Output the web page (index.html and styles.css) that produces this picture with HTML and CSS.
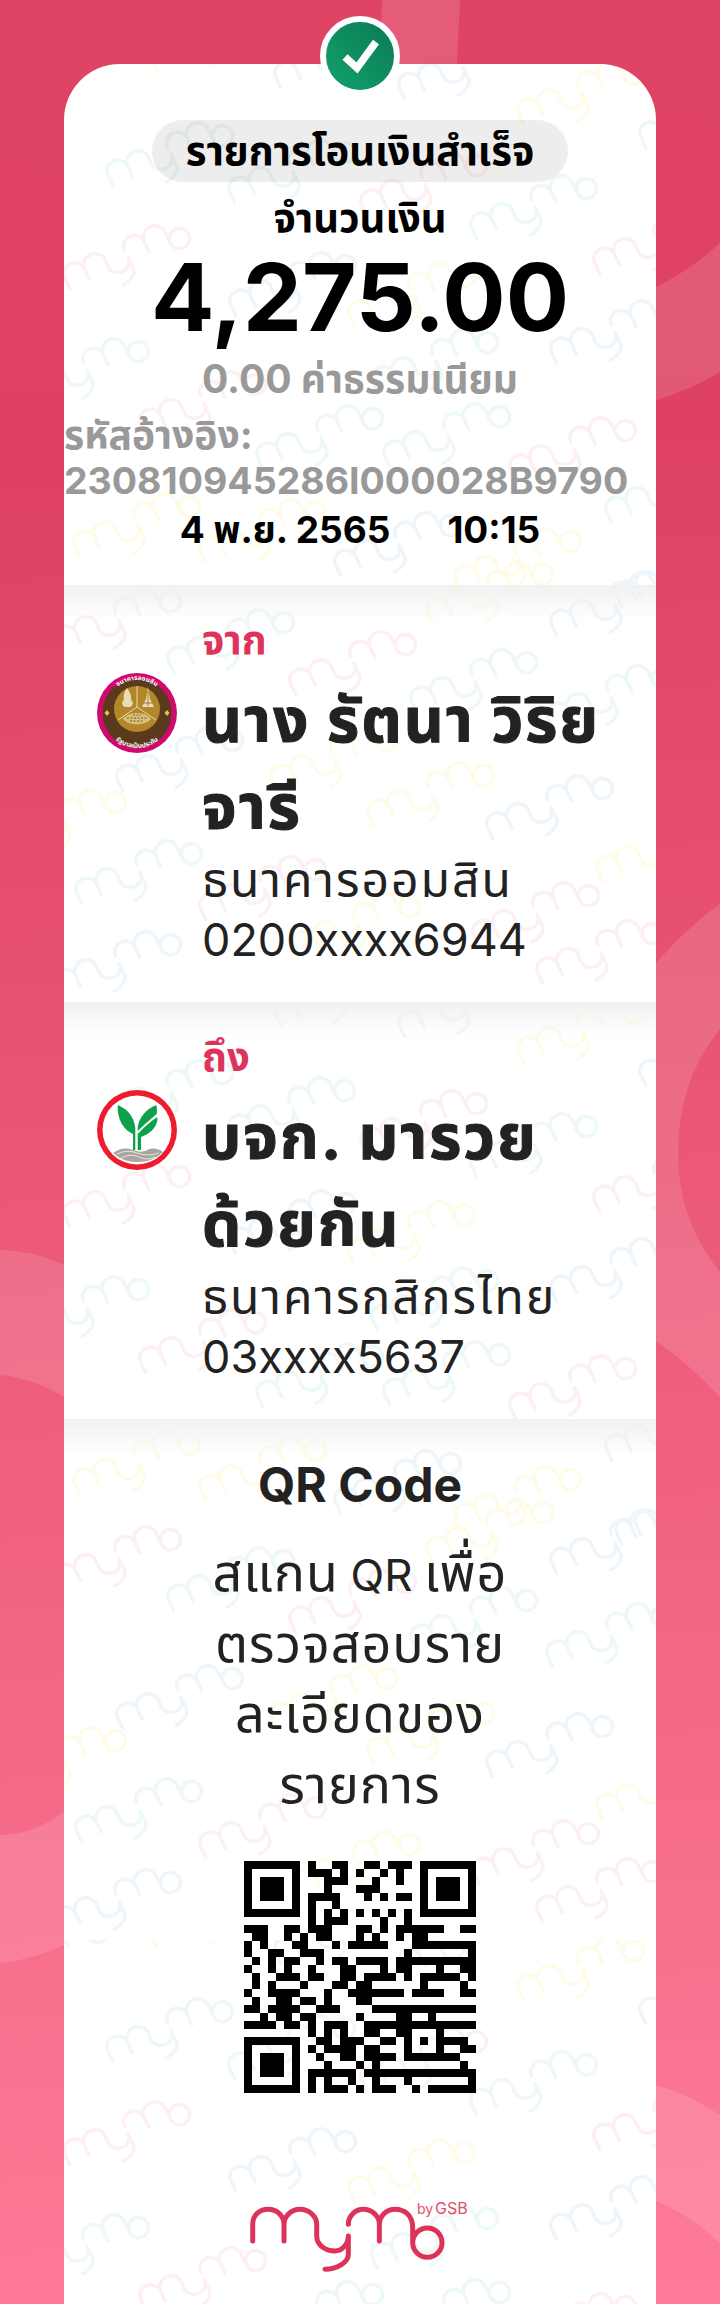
FILE: index.html
```html
<!DOCTYPE html>
<html lang="th">

<head>
    <meta charset="UTF-8">
    <meta name="viewport" content="width=device-width, initial-scale=1.0">
    <title>รายการโอนเงินสำเร็จ</title>
    <link rel="stylesheet" href="styles.css">
</head>

<body>

    <svg class="bg-shapes" viewBox="0 0 720 2304" aria-hidden="true">
        <path d="M382 0 L380 64 L380 200 Q500 380 656 400 Q690 390 720 372 L720 243 Q690 270 656 287 Q500 250 457 64 L460 0 Z" />
        <path fill-rule="evenodd" d="M656 963 Q690 925 720 904 L720 1397 Q690 1365 656 1341 Z M720 1029 Q678 1080 678 1154 Q678 1220 720 1272 Z" />
        <path d="M0 1250 Q32 1250 64 1265 L64 1397 Q32 1378 0 1375 Z" />
        <path d="M0 1835 Q32 1835 64 1812 L64 1945 Q32 1960 0 1963 Z" />
        <path d="M656 2085 Q690 2095 720 2115 L720 2243 Q690 2215 656 2201 Z" />
    </svg>

    <div class="card">
        <svg class="watermark" aria-hidden="true">
            <defs>
                <path id="mark" fill="none" stroke-linecap="round" stroke-linejoin="round" d="M-282 5 V-45 C-282 -75 -260 -90 -235 -90 C-210 -90 -188 -70 -188 -45 V5 M-188 -45 C-188 -70 -165 -90 -140 -90 C-115 -90 -90 -70 -90 -45 V-10 C-90 20 -60 35 -35 35 C-15 35 5 15 5 -10 V45 C5 70 -30 90 -65 90 M5 -45 C5 -70 25 -90 50 -90 C75 -90 98 -70 98 -45 V5 M98 -45 C98 -70 120 -90 145 -90 C175 -90 198 -70 198 -35 V10 A44 44 0 1 0 242 -34 A44 44 0 0 0 198 10" />
                <use id="wm" href="#mark" transform="rotate(-25) scale(.23)" stroke-width="15" />
                <pattern id="tile" width="592" height="938" patternUnits="userSpaceOnUse">
                    <g stroke="#fdf0f2">
                        <use href="#wm" x="-17" y="14" />
                        <use href="#wm" x="361" y="123" />
                        <use href="#wm" x="594" y="181" />
                        <use href="#wm" x="64" y="196" />
                        <use href="#wm" x="140" y="342" />
                        <use href="#wm" x="510" y="388" />
                        <use href="#wm" x="55" y="559" />
                        <use href="#wm" x="290" y="602" />
                        <use href="#wm" x="200" y="827" />
                        <use href="#wm" x="473" y="853" />
                        <use href="#wm" x="537" y="891" />
                    </g>
                    <g stroke="#eef8f6">
                        <use href="#wm" x="107" y="93" />
                        <use href="#wm" x="229" y="110" />
                        <use href="#wm" x="471" y="146" />
                        <use href="#wm" x="23" y="309" />
                        <use href="#wm" x="372" y="300" />
                        <use href="#wm" x="257" y="376" />
                        <use href="#wm" x="384" y="374" />
                        <use href="#wm" x="606" y="430" />
                        <use href="#wm" x="168" y="580" />
                        <use href="#wm" x="411" y="620" />
                        <use href="#wm" x="547" y="636" />
                        <use href="#wm" x="76" y="811" />
                    </g>
                    <g stroke="#fffbe9">
                        <use href="#wm" x="151" y="-22" />
                        <use href="#wm" x="518" y="32" />
                        <use href="#wm" x="349" y="234" />
                        <use href="#wm" x="74" y="464" />
                        <use href="#wm" x="200" y="470" />
                        <use href="#wm" x="455" y="499" />
                        <use href="#wm" x="427" y="532" />
                        <use href="#wm" x="271" y="698" />
                        <use href="#wm" x="368" y="733" />
                        <use href="#wm" x="0" y="760" />
                        <use href="#wm" x="597" y="789" />
                        <use href="#wm" x="294" y="864" />
                    </g>
                    <g stroke="#eef6fc">
                        <use href="#wm" x="275" y="-5" />
                        <use href="#wm" x="399" y="6" />
                        <use href="#wm" x="640" y="55" />
                        <use href="#wm" x="230" y="223" />
                        <use href="#wm" x="551" y="271" />
                        <use href="#wm" x="335" y="483" />
                        <use href="#wm" x="616" y="514" />
                        <use href="#wm" x="551" y="543" />
                        <use href="#wm" x="117" y="698" />
                        <use href="#wm" x="487" y="746" />
                        <use href="#wm" x="55" y="902" />
                    </g>
                </pattern>
            </defs>
            <rect width="100%" height="100%" fill="url(#tile)" />
        </svg>

        <div class="summary">
            <div class="status-pill">รายการโอนเงินสำเร็จ</div>
            <div class="amount-label">จำนวนเงิน</div>
            <div class="amount">4,275.00</div>
            <div class="fee">0.00 ค่าธรรมเนียม</div>
            <div class="ref-label">รหัสอ้างอิง:</div>
            <div class="ref">230810945286I000028B9790</div>
            <div class="datetime"><span>4 พ.ย. 2565</span><span>10:15</span></div>
        </div>

        <div class="party">
            <svg class="bank-logo" viewBox="0 0 80 80" aria-hidden="true">
                <defs>
                    <path id="ringTop" d="M9 38 A31 31 0 0 1 71 38" />
                    <path id="ringBottom" d="M7 42 A33 33 0 0 0 73 42" />
                </defs>
                <circle cx="40" cy="40" r="40" fill="#cf0a6f" />
                <circle cx="40" cy="40" r="34.5" fill="#5a3a1c" />
                <circle cx="40" cy="36" r="23" fill="#b4862a" />
                <path d="M40 13 V34 L21 47 M40 34 L59 47" fill="none" stroke="#ecd9a4" stroke-width="1" />
                <path d="M30 15 C33 19 35 23 34 27 C37 29 36 33 33 34 L28 34 C25 33 24 29 27 27 C26 23 27 19 30 15 Z" fill="#e9dcb8" />
                <path d="M51 14 L53 26 L57 34 H45 L49 26 Z" fill="#e9dcb8" />
                <path d="M51 18 V33 M47 30 H55" stroke="#8a6420" stroke-width=".8" />
                <path d="M26 46 C32 38 48 38 54 46 C48 53 32 53 26 46 Z" fill="#d9bf7c" />
                <path d="M30 45 H50 M33 48 H47 M36 42 H44" stroke="#7a5a1e" stroke-width="1" stroke-dasharray="2 1.5" />
                <text class="ring-text"><textPath href="#ringTop" startOffset="50%" text-anchor="middle">ธนาคารออมสิน</textPath></text>
                <text class="ring-text"><textPath href="#ringBottom" startOffset="50%" text-anchor="middle">รัฐบาลเป็นประกัน</textPath></text>
                <path d="M10 37 L12.5 40 L10 43 L7.5 40 Z M70 37 L72.5 40 L70 43 L67.5 40 Z" fill="#e9c04a" />
            </svg>
            <div class="party-info">
                <div class="party-label">จาก</div>
                <div class="party-name">นาง รัตนา วิริย<br>จารี</div>
                <div class="party-bank">ธนาคารออมสิน</div>
                <div class="party-account">0200xxxx6944</div>
            </div>
        </div>

        <div class="party">
            <svg class="bank-logo" viewBox="0 0 80 80" aria-hidden="true">
                <circle cx="40" cy="40" r="40" fill="#ed1c2e" />
                <circle cx="40" cy="40" r="34.5" fill="#fff" />
                <path d="M20.7 15 C30 19 37 26 38.3 38 V60 H36 V44 C27 40 20 30 20.7 15 Z" fill="#0da14b" />
                <path d="M59.3 15 C49 19 42 27 40.7 38 V41 C48 34 55 28 59.8 24 C60 21 60 18 59.3 15 Z" fill="#0da14b" />
                <path d="M60.5 27 C54 31 47 37 40.7 44 V60 H44 V47 C52 44 61 38 60.5 27 Z" fill="#0da14b" />
                <path d="M16 63 Q26 56 36 60 T52 59 Q60 57 66 62 Q56 72 40 72 Q26 72 16 63 Z" fill="#a9a59f" />
                <path d="M20 64 Q30 59 40 63 T62 63 M24 68 Q34 63 42 67 T58 67" fill="none" stroke="#fff" stroke-width=".7" />
            </svg>
            <div class="party-info">
                <div class="party-label">ถึง</div>
                <div class="party-name">บจก. มารวย<br>ด้วยกัน</div>
                <div class="party-bank">ธนาคารกสิกรไทย</div>
                <div class="party-account">03xxxx5637</div>
            </div>
        </div>

        <div class="qr-section">
            <h2 class="qr-title">QR Code</h2>
            <p class="qr-text">สแกน <span class="qr-latin">QR</span> เพื่อ<br>ตรวจสอบราย<br>ละเอียดของ<br>รายการ</p>
            <svg class="qr-code" viewBox="0 0 29 29" shape-rendering="crispEdges" aria-hidden="true">
                <path fill="none" stroke="#000" stroke-width="1" d="
                    M0 .5h7M8 .5h1M11 .5h2M15 .5h2M18 .5h3M22 .5h7
                    M0 1.5h1M6 1.5h1M8 1.5h3M12 1.5h1M14 1.5h1M17 1.5h1M19 1.5h1M22 1.5h1M28 1.5h1
                    M0 2.5h1M2 2.5h3M6 2.5h1M10 2.5h3M16 2.5h1M19 2.5h1M22 2.5h1M24 2.5h3M28 2.5h1
                    M0 3.5h1M2 3.5h3M6 3.5h1M10 3.5h1M14 3.5h3M22 3.5h1M24 3.5h3M28 3.5h1
                    M0 4.5h1M2 4.5h3M6 4.5h1M8 4.5h4M15 4.5h1M17 4.5h1M19 4.5h2M22 4.5h1M24 4.5h3M28 4.5h1
                    M0 5.5h1M6 5.5h1M8 5.5h1M11 5.5h1M22 5.5h1M28 5.5h1
                    M0 6.5h7M8 6.5h1M10 6.5h1M12 6.5h1M14 6.5h1M16 6.5h1M18 6.5h1M20 6.5h1M22 6.5h7
                    M8 7.5h1M10 7.5h3M17 7.5h1M20 7.5h1
                    M0 8.5h3M5 8.5h2M8 8.5h3M14 8.5h2M17 8.5h1M19 8.5h6M27 8.5h2
                    M1 9.5h2M5 9.5h1M7 9.5h1M9 9.5h2M14 9.5h1M16 9.5h1M19 9.5h1M21 9.5h2
                    M0 10.5h1M2 10.5h1M6 10.5h2M11 10.5h1M13 10.5h5M21 10.5h8
                    M0 11.5h1M3 11.5h2M7 11.5h3M20 11.5h1M28 11.5h1
                    M1 12.5h1M3 12.5h1M5 12.5h2M9 12.5h1M11 12.5h2M14 12.5h4M19 12.5h10
                    M0 13.5h1M3 13.5h1M5 13.5h1M8 13.5h1M12 13.5h2M17 13.5h1M19 13.5h2M24 13.5h1M27 13.5h2
                    M1 14.5h1M4 14.5h3M8 14.5h2M12 14.5h2M15 14.5h4M20 14.5h1M22 14.5h5M28 14.5h1
                    M1 15.5h1M3 15.5h1M7 15.5h1M11 15.5h2M14 15.5h2M22 15.5h1M27 15.5h1
                    M0 16.5h1M3 16.5h4M10 16.5h1M13 16.5h7M21 16.5h4M27 16.5h2
                    M1 17.5h1M4 17.5h2M7 17.5h2M10 17.5h1M14 17.5h2
                    M0 18.5h2M3 18.5h4M9 18.5h3M16 18.5h13
                    M2 19.5h1M4 19.5h2M7 19.5h2M14 19.5h1M19 19.5h2M23 19.5h1
                    M0 20.5h4M5 20.5h2M8 20.5h1M10 20.5h3M15 20.5h14
                    M8 21.5h1M10 21.5h1M12 21.5h1M15 21.5h2M19 21.5h2M24 21.5h1
                    M0 22.5h7M9 22.5h2M12 22.5h3M17 22.5h2M20 22.5h1M22 22.5h1M24 22.5h4
                    M0 23.5h1M6 23.5h1M8 23.5h1M10 23.5h4M15 23.5h2M20 23.5h1M24 23.5h1M27 23.5h2
                    M0 24.5h1M2 24.5h3M6 24.5h1M9 24.5h1M12 24.5h2M15 24.5h4M20 24.5h7
                    M0 25.5h1M2 25.5h3M6 25.5h1M10 25.5h1M14 25.5h1M16 25.5h1M27 25.5h1
                    M0 26.5h1M2 26.5h3M6 26.5h1M8 26.5h6M15 26.5h14
                    M0 27.5h1M6 27.5h1M8 27.5h1M10 27.5h1M13 27.5h1M16 27.5h1M20 27.5h1M28 27.5h1
                    M0 28.5h7M8 28.5h1M10 28.5h3M14 28.5h1M16 28.5h3M21 28.5h1M23 28.5h6" />
            </svg>
            <svg class="brand" viewBox="0 0 220 72" aria-label="mymo by GSB">
                <use href="#mark" stroke="#de3358" stroke-width="15" transform="translate(96.7 38.3) scale(.3333)" />
                <text class="brand-by" x="167" y="13">by</text>
                <text class="brand-gsb" x="185" y="13">GSB</text>
            </svg>
        </div>

        <div class="badge">
            <svg viewBox="0 0 68 68" aria-hidden="true">
                <path d="M19 35 L31 46 L50 20" fill="none" stroke="#fff" stroke-width="7.5" />
            </svg>
        </div>
    </div>

</body>

</html>
```

FILE: styles.css
```css
html,
body {
    margin: 0;
    padding: 0;
}

body {
    position: relative;
    height: 2304px;
    overflow: hidden;
    padding-top: 64px;
    box-sizing: border-box;
    background: linear-gradient(176deg, #e04465 0%, #de4162 20%, #ff7b99 100%);
    font-family: Inter, "Noto Sans", "Noto Sans Thai", "Liberation Sans", sans-serif;
}

.bg-shapes {
    position: absolute;
    top: 0;
    left: 0;
    width: 720px;
    height: 2304px;
    fill: rgba(255, 255, 255, 0.13);
}

.card {
    position: relative;
    width: 592px;
    height: 2240px;
    margin: 0 auto;
    background-color: #fff;
    border-radius: 56px 56px 0 0;
}

.watermark {
    position: absolute;
    top: 0;
    left: 0;
    width: 100%;
    height: 100%;
    border-radius: inherit;
}

.summary,
.party,
.qr-section {
    position: relative;
}

.badge {
    position: absolute;
    top: -48px;
    left: 256px;
    width: 68px;
    height: 68px;
    border: 6px solid #fff;
    border-radius: 50%;
    background: linear-gradient(45deg, #12a26e, #0b7a52);
}

.badge svg {
    display: block;
    width: 68px;
    height: 68px;
}

.summary {
    height: 521px;
    padding-top: 56px;
    box-sizing: border-box;
    text-align: center;
    color: #000;
}

.status-pill {
    width: 416px;
    height: 62px;
    margin: 0 auto;
    border-radius: 31px;
    background-color: rgba(0, 0, 0, 0.07);
    font-size: 40px;
    font-weight: bold;
    line-height: 62px;
}

.amount-label {
    margin-top: 14px;
    font-size: 40px;
    font-weight: bold;
    line-height: 44px;
}

.amount {
    margin-top: 11px;
    font-size: 94px;
    font-weight: bold;
    line-height: 92px;
}

.fee {
    margin-top: 14px;
    font-size: 39px;
    font-weight: bold;
    line-height: 44px;
    color: #999;
}

.ref-label {
    margin-top: 11px;
    font-size: 39px;
    font-weight: bold;
    line-height: 45px;
    color: #999;
    text-align: left;
}

.ref {
    font-size: 37.5px;
    font-weight: bold;
    line-height: 48px;
    color: #999;
    text-align: left;
    white-space: nowrap;
}

.datetime {
    display: flex;
    justify-content: center;
    gap: 57px;
    margin-top: 1px;
    font-size: 37px;
    font-weight: bold;
    line-height: 48px;
}

.party {
    display: flex;
    gap: 25px;
    height: 417px;
    padding: 35px 0 0 33px;
    box-sizing: border-box;
    background: linear-gradient(#f1f1f1, rgba(255, 255, 255, 0) 35px);
    color: #222;
}

.bank-logo {
    flex: none;
    width: 80px;
    height: 80px;
    margin-top: 53px;
}

.ring-text {
    font-size: 6.5px;
    font-weight: bold;
    fill: #fff;
}

.party-label {
    font-size: 40px;
    font-weight: bold;
    line-height: 40px;
    color: #e0335b;
}

.party-name {
    margin-top: 16px;
    font-size: 62px;
    font-weight: bold;
    line-height: 87px;
    letter-spacing: 2px;
    -webkit-text-stroke: 1px #222;
}

.party-bank {
    margin-top: 2px;
    font-size: 48px;
    line-height: 56px;
    letter-spacing: 2px;
}

.party-account {
    margin-top: 4px;
    font-size: 45px;
    line-height: 56px;
}

.qr-section {
    display: flex;
    flex-direction: column;
    align-items: center;
    padding-top: 31px;
    background: linear-gradient(#f1f1f1, rgba(255, 255, 255, 0) 35px);
    color: #222;
}

.qr-title {
    margin: 0;
    font-size: 48px;
    font-weight: bold;
    line-height: 70px;
}

.qr-text {
    margin: 18px 0 0;
    font-size: 52px;
    line-height: 70.5px;
    letter-spacing: 1px;
    word-spacing: -4px;
    text-align: center;
}

.qr-latin {
    font-size: 44px;
    line-height: 1;
    letter-spacing: 0;
}

.qr-code {
    width: 232px;
    height: 232px;
    margin-top: 41px;
}

.brand {
    width: 220px;
    height: 72px;
    margin-top: 108px;
}

.brand-by {
    font-size: 14px;
    fill: #e0506e;
}

.brand-gsb {
    font-size: 16px;
    fill: #e0506e;
}
```
